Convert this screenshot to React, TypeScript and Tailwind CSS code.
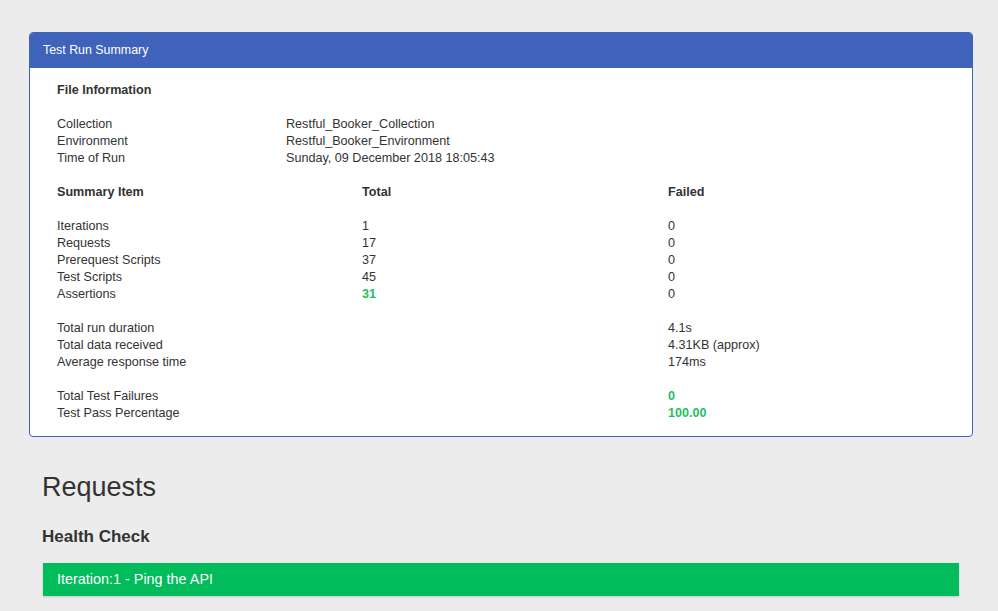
const fileInfo: [string, string][] = [
  ['Collection', 'Restful_Booker_Collection'],
  ['Environment', 'Restful_Booker_Environment'],
  ['Time of Run', 'Sunday, 09 December 2018 18:05:43'],
];

const summary: { label: string; total: string; failed: string; green?: boolean }[] = [
  { label: 'Iterations', total: '1', failed: '0' },
  { label: 'Requests', total: '17', failed: '0' },
  { label: 'Prerequest Scripts', total: '37', failed: '0' },
  { label: 'Test Scripts', total: '45', failed: '0' },
  { label: 'Assertions', total: '31', failed: '0', green: true },
];

const timings: [string, string][] = [
  ['Total run duration', '4.1s'],
  ['Total data received', '4.31KB (approx)'],
  ['Average response time', '174ms'],
];

const results: [string, string][] = [
  ['Total Test Failures', '0'],
  ['Test Pass Percentage', '100.00'],
];

const cols = 'grid grid-cols-[305px_306px_1fr]';

export default function App() {
  return (
    <div
      className="min-h-[611px] bg-[#ececec] text-[#333333] pt-[32px] pb-6"
      style={{ fontFamily: '"Liberation Sans", Arial, sans-serif' }}
    >
      <div className="ml-[29px] w-[944px] bg-white border border-[#3f63ba] rounded-[4px] overflow-hidden">
        <div className="h-[35px] bg-[#3f63ba] text-white text-[12.4px] flex items-center px-[13px] pb-px">
          Test Run Summary
        </div>
        <div className="px-[27px] pt-[14px] pb-[14px] text-[12.6px] leading-[17px]">
          <div className="font-bold">File Information</div>
          <div className="h-[17px]" />
          {fileInfo.map(([k, v]) => (
            <div key={k} className="grid grid-cols-[229px_1fr]">
              <span>{k}</span>
              <span>{v}</span>
            </div>
          ))}
          <div className="h-[17px]" />
          <div className={`${cols} font-bold`}>
            <span>Summary Item</span>
            <span>Total</span>
            <span>Failed</span>
          </div>
          <div className="h-[17px]" />
          {summary.map((r) => (
            <div key={r.label} className={cols}>
              <span>{r.label}</span>
              <span className={r.green ? 'font-bold text-[#1fbf5f]' : ''}>{r.total}</span>
              <span>{r.failed}</span>
            </div>
          ))}
          <div className="h-[17px]" />
          {timings.map(([k, v]) => (
            <div key={k} className={cols}>
              <span>{k}</span>
              <span />
              <span>{v}</span>
            </div>
          ))}
          <div className="h-[17px]" />
          {results.map(([k, v]) => (
            <div key={k} className={cols}>
              <span>{k}</span>
              <span />
              <span className="font-bold text-[#1fbf5f]">{v}</span>
            </div>
          ))}
        </div>
      </div>

      <div className="ml-[42px] w-[917px]">
        <h2 className="mt-[33px] text-[27px] leading-[34px]">Requests</h2>
        <h4 className="mt-[23px] text-[17px] leading-[20px] font-bold">Health Check</h4>
        <div className="mt-[16px] ml-px h-[33px] bg-[#00bc5b] text-white text-[14.4px] flex items-center px-[14px] shadow-[0_1px_2px_rgba(0,0,0,0.15)]">
          Iteration:1 - Ping the API
        </div>
      </div>
    </div>
  );
}
